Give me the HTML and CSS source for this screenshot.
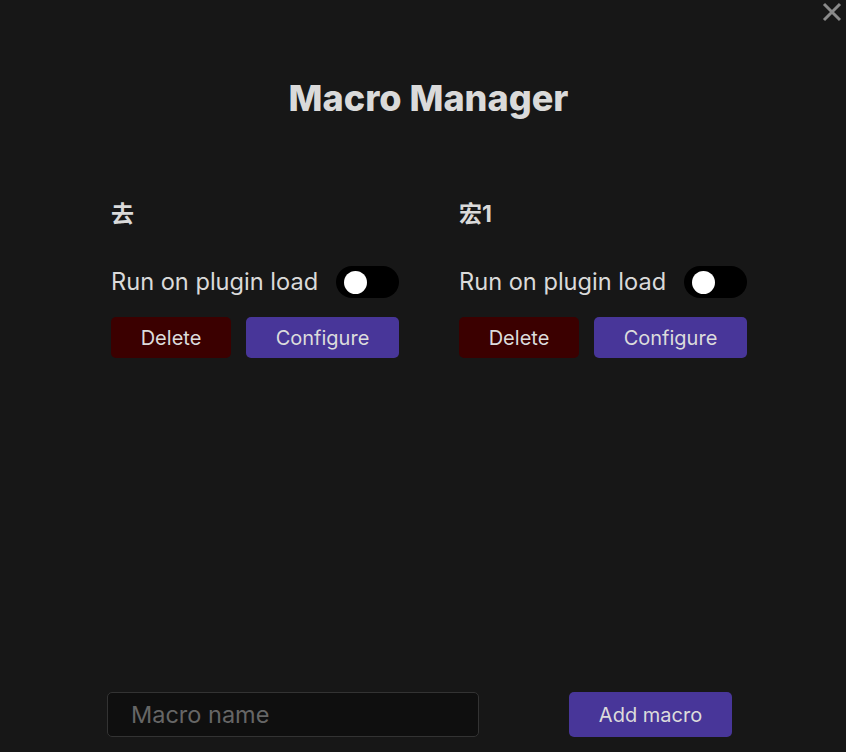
FILE: index.html
```html
<!DOCTYPE html>
<html>
<head>
<meta charset="utf-8">
<link rel="stylesheet" href="styles.css">
</head>
<body>
<div class="modal">
  <button class="close" aria-label="Close">
    <svg width="22" height="22" viewBox="0 0 22 22"><path d="M3 3 L19 19 M19 3 L3 19" stroke="#8a8a8a" stroke-width="3" stroke-linecap="butt"/></svg>
  </button>
  <h1 class="title">Macro Manager</h1>
  <div class="macros">
    <div class="macro">
      <h3 class="macro-name">去</h3>
      <div class="setting">
        <span class="label">Run on plugin load</span>
        <span class="toggle"><span class="knob"></span></span>
      </div>
      <div class="actions">
        <button class="btn btn-delete">Delete</button>
        <button class="btn btn-cta btn-configure">Configure</button>
      </div>
    </div>
    <div class="macro">
      <h3 class="macro-name">宏1</h3>
      <div class="setting">
        <span class="label">Run on plugin load</span>
        <span class="toggle"><span class="knob"></span></span>
      </div>
      <div class="actions">
        <button class="btn btn-delete">Delete</button>
        <button class="btn btn-cta btn-configure">Configure</button>
      </div>
    </div>
  </div>
  <div class="add-row">
    <input class="name-input" type="text" placeholder="Macro name">
    <button class="btn btn-cta btn-add">Add macro</button>
  </div>
</div>
</body>
</html>
```

FILE: styles.css
```css
html, body {
  margin: 0;
  padding: 0;
  background: #171717;
}
body {
  font-family: Inter, "Noto Sans CJK SC", sans-serif;
  color: #dadada;
}
.modal {
  position: relative;
  height: 752px;
  box-sizing: border-box;
  display: flex;
  flex-direction: column;
  padding: 0 0 15px 0;
}
.close {
  position: absolute;
  top: 1px;
  right: 3px;
  background: none;
  border: none;
  padding: 0;
  width: 22px;
  height: 22px;
  cursor: pointer;
}
.close svg { display: block; }
.title {
  margin: 76px 0 0 0;
  padding-left: 11px;
  font-size: 36px;
  line-height: 44px;
  font-weight: 800;
  text-align: center;
}
.macros {
  display: grid;
  grid-template-columns: 288px 288px;
  column-gap: 60px;
  margin: 81px 0 0 111px;
}
.macro-name {
  margin: 0;
  font-size: 23px;
  line-height: 26px;
  font-weight: 700;
}
.setting {
  display: flex;
  align-items: center;
  justify-content: space-between;
  margin-top: 39px;
}
.label {
  font-size: 23.6px;
  line-height: 28px;
}
.toggle {
  width: 63px;
  height: 32px;
  border-radius: 16px;
  background: #000;
  display: flex;
  align-items: center;
  padding-left: 8px;
  box-sizing: border-box;
}
.knob {
  width: 23px;
  height: 23px;
  border-radius: 50%;
  background: #fff;
}
.actions {
  display: flex;
  justify-content: space-between;
  margin-top: 19px;
}
.btn {
  font-family: Inter, sans-serif;
  font-size: 20px;
  color: #dcdcdc;
  border: none;
  border-radius: 5px;
  height: 41px;
  padding: 0;
  cursor: pointer;
}
.btn-delete {
  width: 120px;
  background: #3b0000;
}
.btn-cta {
  background: #483699;
}
.btn-configure {
  width: 153px;
}
.add-row {
  margin-top: auto;
  display: flex;
  align-items: center;
  padding-left: 107px;
}
.name-input {
  width: 372px;
  height: 45px;
  box-sizing: border-box;
  background: #0f0f0f;
  border: 1px solid #333;
  border-radius: 5px;
  padding: 0 0 0 23px;
  font-family: Inter, sans-serif;
  font-size: 23.5px;
  color: #dadada;
  outline: none;
}
.name-input::placeholder {
  color: #666;
}
.btn-add {
  margin-left: 90px;
  width: 163px;
  height: 45px;
}
```
